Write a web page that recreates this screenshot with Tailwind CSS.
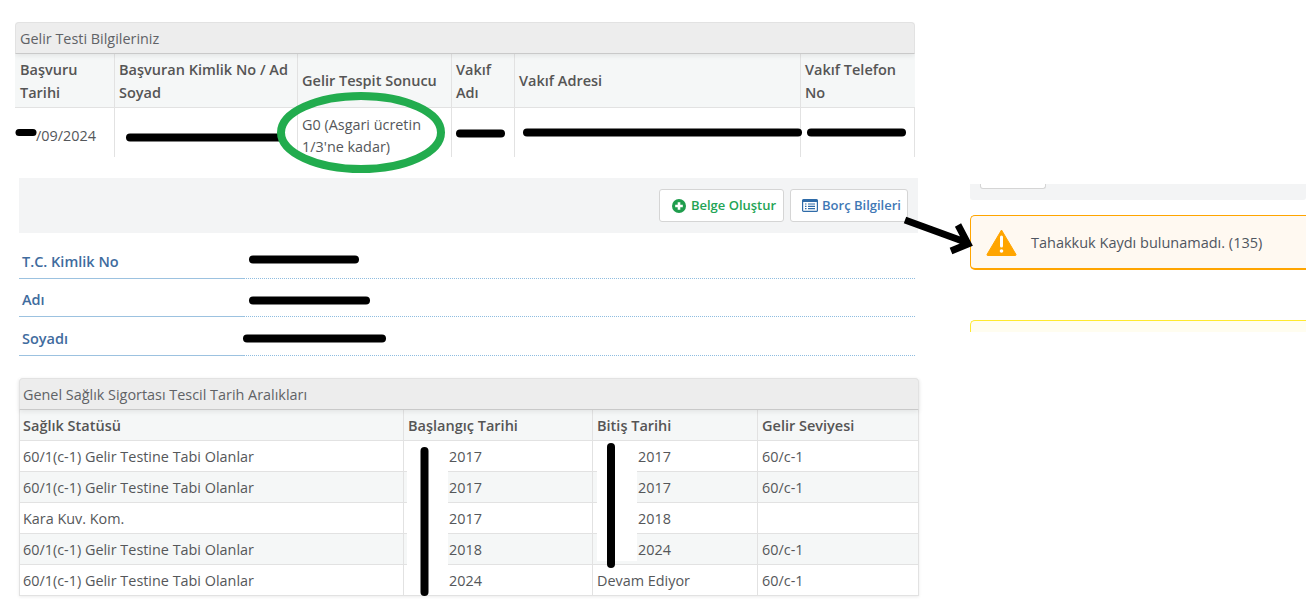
<!DOCTYPE html>
<html lang="tr">
<head>
<meta charset="utf-8">
<script src="https://cdn.jsdelivr.net/npm/@tailwindcss/browser@4"></script>
<title>Gelir Testi</title>
</head>
<body class="bg-white">
<div class="relative w-[1308px] h-[599px] overflow-hidden flex font-['Open_Sans',sans-serif] text-[14.4px] leading-[23px] text-[#55575a]">
  <div class="w-[970px] shrink-0 pt-[22px] pl-[15px]">
    <!-- Panel 1 -->
    <section class="w-[900px] h-[135px] overflow-hidden">
      <div class="relative h-[32px] bg-[#ededed] border border-[#e2e2e2] border-b-[#c9c9c9] rounded-t-[4px] px-1 flex items-center text-[#606266] shadow-[0_2px_5px_rgba(0,0,0,0.07)]">Gelir Testi Bilgileriniz</div>
      <div class="grid grid-cols-[99px_183px_154px_63px_286px_115px] h-[54px] bg-[#f5f7f7] border-b border-[#e2e2e2] font-semibold text-[14.5px] text-[#555]">
        <div class="pl-[5px] pr-1 flex items-center">Başvuru Tarihi</div>
        <div class="px-1 flex items-center border-l border-[#e2e2e2]">Başvuran Kimlik No / Ad Soyad</div>
        <div class="px-1 flex items-center border-l border-[#e2e2e2]">Gelir Tespit Sonucu</div>
        <div class="px-1 flex items-center border-l border-[#e2e2e2]">Vakıf Adı</div>
        <div class="px-1 flex items-center border-l border-[#e2e2e2]">Vakıf Adresi</div>
        <div class="px-1 flex items-center border-l border-[#e2e2e2]">Vakıf Telefon No</div>
      </div>
      <div class="grid grid-cols-[99px_183px_154px_63px_286px_115px] h-[49px]">
        <div class="pl-[21px] flex items-center"><span class="pt-[5px]">/09/2024</span></div>
        <div class="border-l border-[#e2e2e2]"></div>
        <div class="px-1 flex items-center border-l border-[#e2e2e2] leading-[22px] pt-[6px]">G0 (Asgari ücretin 1/3'ne kadar)</div>
        <div class="border-l border-[#e2e2e2]"></div>
        <div class="border-l border-[#e2e2e2]"></div>
        <div class="border-x border-[#e2e2e2]"></div>
      </div>
    </section>
    <!-- Toolbar -->
    <div class="ml-[4px] mt-[21px] w-[899px] h-[55px] bg-[#f3f4f5] flex justify-end items-center gap-[6px] pr-[10px]">
      <button class="h-[33px] w-[125px] bg-white border border-[#d5d5d5] rounded-[3px] flex items-center justify-center gap-[5px] pl-[5px] text-[13px] font-semibold text-[#23a455]">
        <svg class="w-[14px] h-[14px]" viewBox="0 0 14 14"><circle cx="7" cy="7" r="7" fill="#1f9d4d"/><path d="M7 3.200v7.600M3.200 7h7.600" stroke="#fff" stroke-width="2.600"/></svg>
        Belge Oluştur
      </button>
      <button class="h-[33px] w-[118px] bg-white border border-[#d5d5d5] rounded-[3px] flex items-center justify-center gap-[4px] pl-[5px] text-[13px] font-semibold text-[#3f78b5]">
        <svg class="w-[16px] h-[13px]" viewBox="0 0 16 13"><rect x="0.600" y="0.600" width="14.800" height="11.800" rx="1" fill="#fff" stroke="#2f6ba8" stroke-width="1.200"/><rect x="0.600" y="0.600" width="14.800" height="2.400" fill="#2f6ba8"/><path d="M3 5h1.500M6 5h7M3 7.300h1.500M6 7.300h7M3 9.600h1.500M6 9.600h7" stroke="#2f6ba8" stroke-width="1.200"/></svg>
        Borç Bilgileri
      </button>
    </div>
    <!-- Info rows -->
    <dl class="ml-[4px] mt-[8px] w-[896px] font-semibold text-[14.5px] text-[#3f6c9e]">
      <div class="h-[38px] flex items-end border-b border-dotted border-[#8fbde0]"><dt class="w-[225px] h-[39px] -mb-px pl-[3px] pt-[10px] border-b border-[#9cc2e0]">T.C. Kimlik No</dt><dd></dd></div>
      <div class="h-[38px] flex items-end border-b border-dotted border-[#8fbde0]"><dt class="w-[225px] h-[39px] -mb-px pl-[3px] pt-[10px] border-b border-[#9cc2e0]">Adı</dt><dd></dd></div>
      <div class="h-[39px] flex items-end border-b border-dotted border-[#8fbde0]"><dt class="w-[225px] h-[39px] -mb-px pl-[3px] pt-[10px] border-b border-[#9cc2e0]">Soyadı</dt><dd></dd></div>
    </dl>
    <!-- Panel 2 -->
    <section class="ml-[4px] mt-[22px] w-[900px] shadow-[0_1px_3px_rgba(0,0,0,0.08)]">
      <div class="relative h-[32px] bg-[#ededed] border border-[#e2e2e2] border-b-[#c9c9c9] rounded-t-[4px] pl-[3px] flex items-center text-[#606266] shadow-[0_2px_5px_rgba(0,0,0,0.07)]">Genel Sağlık Sigortası Tescil Tarih Aralıkları</div>
      <div class="border-x border-b border-[#e2e2e2]">
        <div class="grid grid-cols-[383px_189px_165px_1fr] h-[31px] bg-[#f5f7f7] border-b border-[#e2e2e2] font-semibold text-[14.5px] text-[#555]">
          <div class="pl-[3px] flex items-center">Sağlık Statüsü</div>
          <div class="px-1 flex items-center border-l border-[#e2e2e2]">Başlangıç Tarihi</div>
          <div class="px-1 flex items-center border-l border-[#e2e2e2]">Bitiş Tarihi</div>
          <div class="px-1 flex items-center border-l border-[#e2e2e2]">Gelir Seviyesi</div>
        </div>
        <div class="grid grid-cols-[383px_189px_165px_1fr] h-[31px] border-b border-[#e2e2e2]">
          <div class="pl-[3px] flex items-center">60/1(c-1) Gelir Testine Tabi Olanlar</div>
          <div class="pl-[45px] flex items-center border-l border-[#e2e2e2]">2017</div>
          <div class="pl-[45px] flex items-center border-l border-[#e2e2e2]">2017</div>
          <div class="px-1 flex items-center border-l border-[#e2e2e2]">60/c-1</div>
        </div>
        <div class="grid grid-cols-[383px_189px_165px_1fr] h-[31px] bg-[#f5f7f7] border-b border-[#e2e2e2]">
          <div class="pl-[3px] flex items-center">60/1(c-1) Gelir Testine Tabi Olanlar</div>
          <div class="pl-[45px] flex items-center border-l border-[#e2e2e2]">2017</div>
          <div class="pl-[45px] flex items-center border-l border-[#e2e2e2]">2017</div>
          <div class="px-1 flex items-center border-l border-[#e2e2e2]">60/c-1</div>
        </div>
        <div class="grid grid-cols-[383px_189px_165px_1fr] h-[31px] border-b border-[#e2e2e2]">
          <div class="pl-[3px] flex items-center">Kara Kuv. Kom.</div>
          <div class="pl-[45px] flex items-center border-l border-[#e2e2e2]">2017</div>
          <div class="pl-[45px] flex items-center border-l border-[#e2e2e2]">2018</div>
          <div class="px-1 flex items-center border-l border-[#e2e2e2]"></div>
        </div>
        <div class="grid grid-cols-[383px_189px_165px_1fr] h-[31px] bg-[#f5f7f7] border-b border-[#e2e2e2]">
          <div class="pl-[3px] flex items-center">60/1(c-1) Gelir Testine Tabi Olanlar</div>
          <div class="pl-[45px] flex items-center border-l border-[#e2e2e2]">2018</div>
          <div class="pl-[45px] flex items-center border-l border-[#e2e2e2]">2024</div>
          <div class="px-1 flex items-center border-l border-[#e2e2e2]">60/c-1</div>
        </div>
        <div class="grid grid-cols-[383px_189px_165px_1fr] h-[30px]">
          <div class="pl-[3px] flex items-center">60/1(c-1) Gelir Testine Tabi Olanlar</div>
          <div class="pl-[45px] flex items-center border-l border-[#e2e2e2]">2024</div>
          <div class="px-1 flex items-center border-l border-[#e2e2e2]">Devam Ediyor</div>
          <div class="px-1 flex items-center border-l border-[#e2e2e2]">60/c-1</div>
        </div>
      </div>
    </section>
  </div>
  <!-- Right column -->
  <aside class="w-[336px] shrink-0 pt-[184px]">
    <div class="h-[16px] bg-[#f3f4f5] rounded-b-[3px] pl-[10px]">
      <div class="w-[66px] h-[5px] bg-white border border-t-0 border-[#d5d5d5] rounded-b-[3px]"></div>
    </div>
    <div class="mt-[15px] h-[55px] bg-[#fff9f1] border border-b-2 border-r-0 border-[#ffa500] rounded-l-[5px] flex items-center pl-[15px] gap-[14px] text-[14.5px] text-[#4f5560]">
      <svg class="w-[31px] h-[27px] shrink-0" viewBox="0 0 31 27"><path d="M15.500 1 L30 25.500 Q30.300 26.500 29 26.500 L2 26.500 Q0.700 26.500 1 25.500 Z" fill="#ffa500" stroke="#ffa500" stroke-linejoin="round"/><path d="M15.500 8v9" stroke="#fff" stroke-width="3" stroke-linecap="round"/><circle cx="15.500" cy="22" r="1.800" fill="#fff"/></svg>
      <span>Tahakkuk Kaydı bulunamadı. (135)</span>
    </div>
    <div class="mt-[50px] h-[12px] bg-[#fffdf0] border-t border-l border-[#ffe92e] rounded-tl-[5px]"></div>
  </aside>

  <!-- Hand-drawn annotations over the screenshot -->
  <svg class="absolute inset-0 pointer-events-none" width="1308" height="599" viewBox="0 0 1308 599" fill="none">
    <rect x="407" y="441" width="41" height="154" fill="#fff"/>
    <rect x="597" y="441" width="40" height="120" fill="#fff"/>
    <g stroke="#000" stroke-linecap="round">
      <path d="M19 132.500H33" stroke-width="7"/>
      <path d="M130 137.500H280" stroke-width="8"/>
      <path d="M460 133.500H501" stroke-width="8"/>
      <path d="M527 132.500H798" stroke-width="8"/>
      <path d="M811 132.500H902" stroke-width="8"/>
      <path d="M253 259.500H355" stroke-width="8"/>
      <path d="M253 300.500H366" stroke-width="8"/>
      <path d="M247 338.500H382" stroke-width="8"/>
      <path d="M424.500 451V592" stroke-width="8"/>
      <path d="M611 447V564" stroke-width="8"/>
    </g>
    <path d="M905 220L968 243M958 225L968 244L951 251" stroke="#000" stroke-width="7" stroke-linejoin="miter"/>
    <ellipse cx="361" cy="132.500" rx="80" ry="36.500" stroke="#22ac4e" stroke-width="8"/>
  </svg>
</div>
</body>
</html>
